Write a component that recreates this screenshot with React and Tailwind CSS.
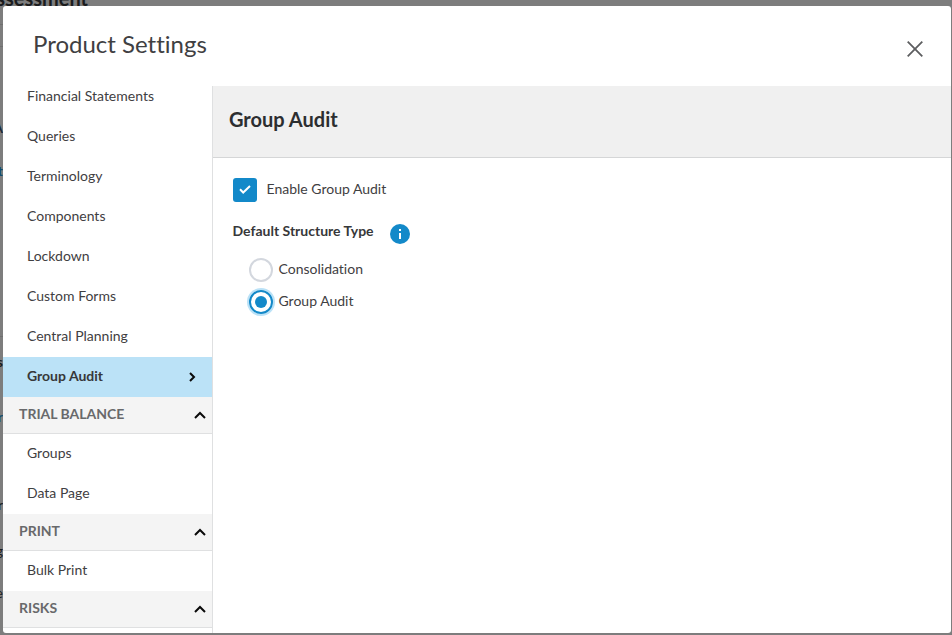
import React from "react";

const firstItems = [
  "Financial Statements",
  "Queries",
  "Terminology",
  "Components",
  "Lockdown",
  "Custom Forms",
  "Central Planning",
];

function NavItem({ label }) {
  return (
    <div className="flex h-10 shrink-0 items-center pb-0.5 pl-6 text-sm text-[#3f4042]">{label}</div>
  );
}

function NavSection({ label }) {
  return (
    <div className="flex h-[37px] shrink-0 items-center justify-between border-b border-[#dfe0e1] bg-[#f4f4f4] pl-4 pr-1.5">
      <span className="pb-0.5 text-sm font-bold text-[#68696b]">{label}</span>
      <svg width="12" height="8" viewBox="0 0 12 8" fill="none" stroke="#0a0a0a" strokeWidth="2">
        <path d="M1 7l5-5 5 5" />
      </svg>
    </div>
  );
}

function PageBehind() {
  return (
    <div className="absolute inset-0 overflow-hidden bg-[#7d7d7d] text-sm font-bold text-[#1b1c1d]">
      <div className="absolute right-[864px] top-[-14px] text-[20px] leading-6">Assessment</div>
      <div className="absolute left-0 top-[24px] h-px w-[3px] bg-[#6f6f6f]" />
      <div className="absolute left-0 top-[46px] h-px w-[3px] bg-[#6f6f6f]" />
      <div className="absolute right-[949px] top-[118px] text-[#1c2b3a]">A</div>
      <div className="absolute right-[949px] top-[161px] text-[#124a6b]">t</div>
      <div className="absolute left-0 top-[336px] h-px w-[3px] bg-[#6f6f6f]" />
      <div className="absolute right-[949px] top-[352px]">s</div>
      <div className="absolute right-[949px] top-[407px] font-normal text-[#124a6b]">r</div>
      <div className="absolute right-[949px] top-[495px] font-normal">r</div>
      <div className="absolute right-[949px] top-[541px] font-normal">g</div>
      <div className="absolute right-[949px] top-[583px] font-normal">e</div>
    </div>
  );
}

export default function App() {
  return (
    <div className="relative h-[635px] w-[952px] overflow-hidden pb-0.5 pl-[3px] pr-px pt-1.5 font-['Lato',sans-serif] [font-variant-ligatures:none]">
      <PageBehind />
      <div className="relative flex h-[627px] flex-col overflow-hidden rounded-[3px] bg-white">
        <header className="flex h-20 shrink-0 items-start justify-between pl-[30px] pr-7">
          <h1 className="pt-5 text-2xl leading-9 text-[#3f4042]">Product Settings</h1>
          <svg className="mt-[35px]" width="16" height="16" viewBox="0 0 16 16" fill="none" stroke="#5d5e60" strokeWidth="1.8">
            <path d="M.7.7l14.6 14.6M15.3.7L.7 15.3" />
          </svg>
        </header>
        <div className="flex min-h-0 flex-1">
          <nav className="flex w-[210px] shrink-0 flex-col overflow-hidden border-r border-[#dfe0e1]">
            <div className="-mt-[9px] flex flex-col">
              {firstItems.map((t) => (
                <NavItem key={t} label={t} />
              ))}
              <div className="flex h-10 items-center justify-between bg-[#bbe2f7] pl-6 pr-4 text-sm font-bold text-[#37383a]">
                <span className="pb-0.5">Group Audit</span>
                <svg width="7" height="10" viewBox="0 0 7 10" fill="none" stroke="#0a0a0a" strokeWidth="2">
                  <path d="M1 1l4 4-4 4" />
                </svg>
              </div>
              <NavSection label="TRIAL BALANCE" />
              <NavItem label="Groups" />
              <NavItem label="Data Page" />
              <NavSection label="PRINT" />
              <NavItem label="Bulk Print" />
              <NavSection label="RISKS" />
            </div>
          </nav>
          <main className="flex flex-1 flex-col">
            <div className="flex h-[72px] items-center border-b border-[#d5d6d7] bg-[#f0f0f0] pb-[5px] pl-4">
              <h2 className="text-xl font-bold text-[#2c2e30]">Group Audit</h2>
            </div>
            <div className="flex flex-col pl-5 pt-5 text-sm text-[#3f4042]">
              <div className="flex h-6 items-center">
                <span className="flex size-6 items-center justify-center rounded-[3px] bg-[#1389c9] pb-0.5">
                  <svg width="12" height="9" viewBox="0 0 12 9" fill="none" stroke="#fff" strokeWidth="2">
                    <path d="M1 4.3l3.2 3.2L11 1" />
                  </svg>
                </span>
                <span className="pb-0.5 pl-[9.5px]">Enable Group Audit</span>
              </div>
              <div className="mt-[22px] flex h-5 items-center">
                <span className="-ml-[0.5px] pb-[7px] font-bold text-[#37383a]">Default Structure Type</span>
                <svg className="ml-4" width="20" height="20" viewBox="0 0 20 20">
                  <circle cx="10" cy="10" r="10" fill="#1389c9" />
                  <path d="M9 5h2v2H9zM9 9h2v6H9z" fill="#fff" />
                </svg>
              </div>
              <div className="mt-3.5 flex flex-col gap-2 pl-4">
                <div className="flex h-6 items-center">
                  <span className="size-6 rounded-full border-2 border-[#d3d7de]" />
                  <span className="pb-0.5 pl-[5.5px]">Consolidation</span>
                </div>
                <div className="flex h-6 items-center">
                  <span className="flex size-6 items-center justify-center rounded-full border-2 border-[#1389c9] shadow-[0_0_0_2px_#bbe2f7]">
                    <span className="size-3 rounded-full bg-[#1389c9]" />
                  </span>
                  <span className="pb-0.5 pl-[5.5px]">Group Audit</span>
                </div>
              </div>
            </div>
          </main>
        </div>
      </div>
    </div>
  );
}
